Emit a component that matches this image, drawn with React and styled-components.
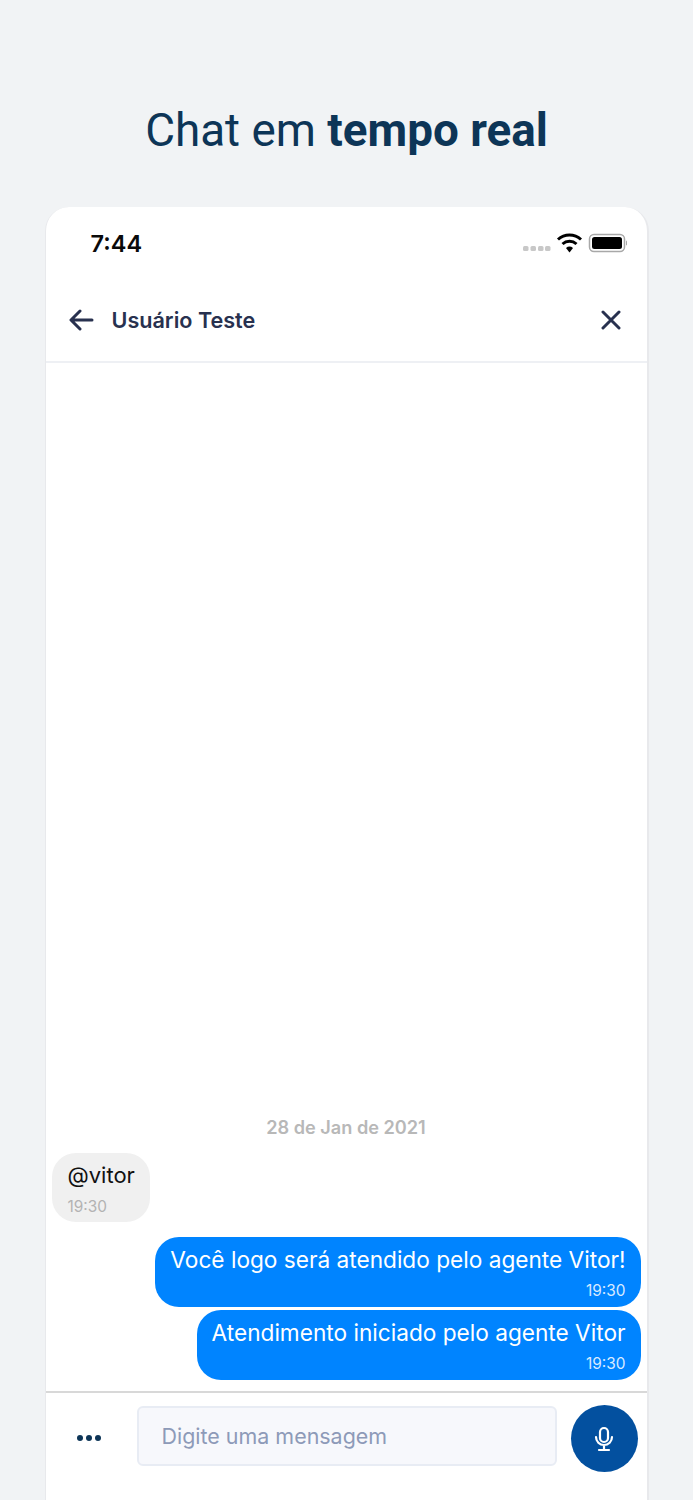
import React from "react";
import styled, { createGlobalStyle } from "styled-components";

const Global = createGlobalStyle`
  html, body { margin: 0; padding: 0; background: #f1f3f5; }
  body { font-family: "Inter", "Liberation Sans", sans-serif; }
  #root { height: 1500px; overflow: hidden; }
`;

const Page = styled.main`
  width: 693px;
  height: 1500px;
  overflow: hidden;
  box-sizing: border-box;
  padding-top: 102px;
  display: flex;
  flex-direction: column;
  align-items: center;
`;

const Title = styled.h1`
  margin: 0;
  height: 105px;
  flex: none;
  font-family: "Roboto", sans-serif;
  font-weight: 400;
  font-size: 45.8px;
  line-height: 58px;
  color: #0d3557;
  text-align: center;
  strong { font-weight: 700; }
`;

const Card = styled.section`
  width: 604px;
  height: 1293px;
  flex: none;
  box-sizing: border-box;
  background: #fff;
  border-radius: 24px 24px 0 0;
  border-left: 1px solid #e8e9ec;
  border-right: 2px solid #e8e9ec;
  display: flex;
  flex-direction: column;
`;

const StatusBar = styled.div`
  height: 73px;
  flex: none;
  box-sizing: border-box;
  padding: 21px 20px 0 45px;
  display: flex;
  justify-content: space-between;
  align-items: flex-start;
`;

const Clock = styled.span`
  font-size: 23.5px;
  line-height: 32px;
  font-weight: 600;
  color: #0a0a0a;
`;

const StatusIcons = styled.div`
  display: flex;
  align-items: flex-start;
  margin-top: 5px;
`;

const NavBar = styled.header`
  height: 83px;
  flex: none;
  box-sizing: border-box;
  border-bottom: 2px solid #eef0f4;
  padding: 0 26px 2px 23px;
  display: flex;
  align-items: center;
  gap: 17px;
`;

const NavTitle = styled.span`
  flex: 1;
  font-size: 21.6px;
  font-weight: 600;
  color: #28314f;
`;

const ChatArea = styled.div`
  flex: none;
  height: 1030px;
  box-sizing: border-box;
  padding: 0 6px 11.5px 6px;
  display: flex;
  flex-direction: column;
  justify-content: flex-end;
  border-bottom: 2px solid #d8d8d8;
`;

const DateLabel = styled.div`
  text-align: center;
  font-size: 18.15px;
  line-height: 24px;
  font-weight: 600;
  color: #b8b8b8;
  margin-bottom: 14px;
`;

const Bubble = styled.div`
  box-sizing: border-box;
  height: 69.6px;
  border-radius: 24px;
  padding: 8px 15px 0 ${(p) => (p.$mine ? 15 : 16)}px;
  align-self: ${(p) => (p.$mine ? "flex-end" : "flex-start")};
  background: ${(p) => (p.$mine ? "#0084ff" : "#f0f0f0")};
  color: ${(p) => (p.$mine ? "#fff" : "#111")};
  margin-top: ${(p) => p.$gap}px;
  display: flex;
  flex-direction: column;
`;

const BubbleText = styled.span`
  font-size: ${(p) => (p.$mine ? 22.65 : 22)}px;
  line-height: 29px;
  white-space: nowrap;
`;

const BubbleTime = styled.span`
  font-size: 15.4px;
  line-height: 20px;
  margin-top: 7px;
  align-self: ${(p) => (p.$mine ? "flex-end" : "flex-start")};
  color: ${(p) => (p.$mine ? "rgba(255,255,255,0.85)" : "#b3b3b3")};
`;

const Composer = styled.footer`
  flex: 1;
  box-sizing: border-box;
  padding: 12px 9px 0 23px;
  display: flex;
  align-items: flex-start;
`;

const MoreButton = styled.div`
  width: 68px;
  height: 66px;
  flex: none;
  display: flex;
  align-items: center;
  justify-content: center;
  gap: 3px;
  padding-right: 27px;
  box-sizing: border-box;
`;

const Dot = styled.i`
  width: 6px;
  height: 6px;
  border-radius: 50%;
  background: #0d3557;
`;

const InputBox = styled.div`
  width: 420px;
  height: 60px;
  flex: none;
  box-sizing: border-box;
  margin-top: 1px;
  background: #f7f8fc;
  border: 2px solid #e8ecf4;
  border-radius: 6px;
  padding-left: 23px;
  display: flex;
  align-items: center;
  font-size: 21.45px;
  color: #8d9ab8;
`;

const MicButton = styled.div`
  width: 67px;
  height: 67px;
  flex: none;
  margin-left: 14px;
  border-radius: 50%;
  background: #03509f;
  display: flex;
  align-items: center;
  justify-content: center;
`;

export default function App() {
  return (
    <Page>
      <Global />
      <Title>
        Chat em <strong>tempo real</strong>
      </Title>
      <Card>
        <StatusBar>
          <Clock>7:44</Clock>
          <StatusIcons>
            <svg width="104" height="22" viewBox="0 0 104 22">
              <g fill="#c8c8c8">
                <rect x="0" y="13" width="5.500" height="5" rx="1.500" />
                <rect x="7.500" y="13" width="5.500" height="5" rx="1.500" />
                <rect x="15" y="13" width="5.500" height="5" rx="1.500" />
                <rect x="22" y="13" width="5.500" height="5" rx="1.500" />
              </g>
              <path d="M35 6.500a17 17 0 0 1 23 0" fill="none" stroke="#000" strokeWidth="3" />
              <path d="M39.500 11a10.500 10.500 0 0 1 14 0" fill="none" stroke="#000" strokeWidth="3" />
              <path d="M43 15a5.600 5.600 0 0 1 7 0l-3.500 4.500z" fill="#000" />
              <rect x="66.500" y="1.500" width="35" height="17" rx="4.500" fill="none" stroke="#a8a8a8" strokeWidth="1.500" />
              <rect x="69" y="4" width="30" height="12" rx="2.500" fill="#000" />
              <path d="M103 7.500c1 .4 1.500 1.400 1.500 2.500s-.5 2.100-1.500 2.500z" fill="#a8a8a8" />
            </svg>
          </StatusIcons>
        </StatusBar>
        <NavBar>
          <svg width="26" height="24" viewBox="0 0 26 24" fill="none" stroke="#28314f" strokeWidth="3" strokeLinecap="round" strokeLinejoin="round">
            <path d="M23 12H2.500M11 3 2 12l9 9" />
          </svg>
          <NavTitle>Usuário Teste</NavTitle>
          <svg width="20" height="20" viewBox="0 0 20 20" fill="none" stroke="#28314f" strokeWidth="3" strokeLinecap="round">
            <path d="M2 2l16 16M18 2 2 18" />
          </svg>
        </NavBar>
        <ChatArea>
          <DateLabel>28 de Jan de 2021</DateLabel>
          <Bubble $gap={0}>
            <BubbleText>@vitor</BubbleText>
            <BubbleTime>19:30</BubbleTime>
          </Bubble>
          <Bubble $mine $gap={15}>
            <BubbleText $mine>Você logo será atendido pelo agente Vitor!</BubbleText>
            <BubbleTime $mine>19:30</BubbleTime>
          </Bubble>
          <Bubble $mine $gap={3}>
            <BubbleText $mine>Atendimento iniciado pelo agente Vitor</BubbleText>
            <BubbleTime $mine>19:30</BubbleTime>
          </Bubble>
        </ChatArea>
        <Composer>
          <MoreButton>
            <Dot />
            <Dot />
            <Dot />
          </MoreButton>
          <InputBox>Digite uma mensagem</InputBox>
          <MicButton>
            <svg width="26" height="26" viewBox="0 0 26 26" fill="none" stroke="#fff" strokeWidth="2.200" strokeLinecap="round">
              <rect x="9" y="2" width="8" height="14" rx="4" />
              <path d="M5 11a8 8 0 0 0 16 0M13 19.500v4M8 24h10" />
            </svg>
          </MicButton>
        </Composer>
      </Card>
    </Page>
  );
}
